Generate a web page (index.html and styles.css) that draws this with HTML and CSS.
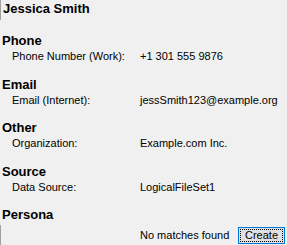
FILE: index.html
```html
<!DOCTYPE html>
<html lang="en">

<head>
    <meta charset="UTF-8">
    <meta name="viewport" content="width=device-width, initial-scale=1.0">
    <title>Contact card</title>
    <link rel="stylesheet" href="styles.css">
</head>

<body>
    <div class="card">
        <div class="name">Jessica Smith</div>

        <div class="section">
            <div class="sectionTitle">Phone</div>
            <div class="row">
                <span class="label">Phone Number (Work):</span>
                <span class="value">+1 301 555 9876</span>
            </div>
        </div>

        <div class="section">
            <div class="sectionTitle">Email</div>
            <div class="row">
                <span class="label">Email (Internet):</span>
                <span class="value">jessSmith123@example.org</span>
            </div>
        </div>

        <div class="section">
            <div class="sectionTitle">Other</div>
            <div class="row">
                <span class="label">Organization:</span>
                <span class="value">Example.com Inc.</span>
            </div>
        </div>

        <div class="section">
            <div class="sectionTitle">Source</div>
            <div class="row">
                <span class="label">Data Source:</span>
                <span class="value">LogicalFileSet1</span>
            </div>
        </div>

        <div class="section">
            <div class="sectionTitle">Persona</div>
            <div class="row personaRow">
                <span class="label"></span>
                <span class="value">No matches found</span>
                <button class="createBtn"><span class="focusRing">Create</span></button>
            </div>
        </div>
    </div>
</body>

</html>
```

FILE: styles.css
```css
* {
    margin: 0;
    padding: 0;
    box-sizing: border-box;
}

body {
    background: #f0f0f0;
    color: black;
    font-family: 'Liberation Sans', Arial, sans-serif;
    font-size: 11px;
    width: 287px;
    height: 245px;
    overflow: hidden;
}

.card {
    display: flex;
    flex-direction: column;
}

.name {
    font-weight: bold;
    font-size: 13px;
    line-height: 18px;
    padding-left: 2px;
    border-left: 1px solid #a0a0a0;
    height: 20px;
}

.section {
    display: flex;
    flex-direction: column;
    margin-top: 13.5px;
}

.name + .section {
    margin-top: 13px;
}

.sectionTitle {
    font-weight: bold;
    font-size: 13px;
    line-height: 16px;
    padding-left: 2px;
}

.row {
    display: flex;
    align-items: center;
    line-height: 14px;
    height: 14px;
    white-space: nowrap;
}

.label {
    flex-shrink: 0;
    width: 140px;
    padding-left: 12px;
}

.personaRow {
    margin-top: 2px;
    height: 20px;
    border-left: 1px solid #a0a0a0;
}

.personaRow .label {
    width: 139px;
}

.createBtn {
    margin-left: auto;
    margin-right: 2px;
    width: 47px;
    height: 17px;
    border: 1px solid #0078d7;
    background: #e1e1e1;
    font-family: inherit;
    font-size: 11px;
    padding: 1px;
    display: flex;
}

.focusRing {
    flex: 1;
    border: 1px dotted black;
    line-height: 11px;
}
```
